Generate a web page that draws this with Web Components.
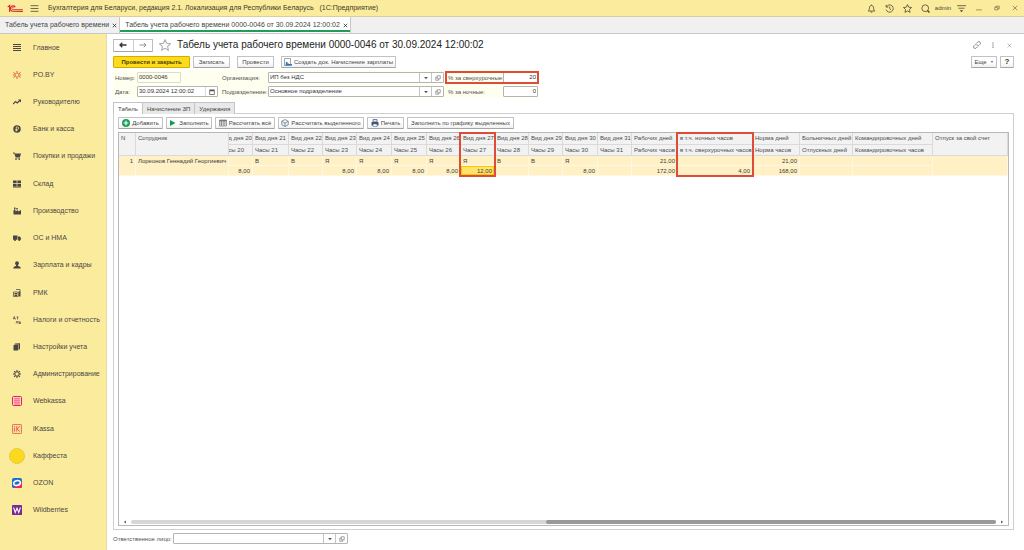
<!DOCTYPE html>
<html lang="ru">
<head>
<meta charset="utf-8">
<title>Табель учета рабочего времени</title>
<style>
html, body { margin: 0; height: 100%; }
body { font: 6px/8px "Liberation Sans", Arial, sans-serif; color: #444; background: #fff; }
</style>
</head>
<body>
<app-shell></app-shell>
<script>
const define = (name, render) => customElements.define(name, class extends HTMLElement {
  connectedCallback() {
    if (this.shadowRoot) return;
    const t = document.createElement('template');
    t.innerHTML = typeof render === 'function' ? render(this) : render;
    this.attachShadow({ mode: 'open' }).append(t.content.cloneNode(true));
  }
});

/* Icons: 16-unit box, drawn with currentColor unless a colour is part of the sign */
const S = 'fill="none" stroke="currentColor" stroke-width="1.4"';
const icons = {
  logo: '<g fill="none" stroke="#d8232f" stroke-width="2"><path d="M1 5.500L4.500 2.500V14"/><path d="M14.500 5.500A4.800 4.800 0 1 0 10.500 13H28"/><path d="M12.600 6.500A2.300 2.300 0 1 0 10.500 10H28" stroke-width="1.500"/></g>',
  menu: `<path ${S} d="M1 3h14M1 8h14M1 13h14"/>`,
  bell: `<path ${S} d="M2 12.500c2-1.500 2-3 2.300-5.500C4.600 4 6 2.500 8 2.500S11.400 4 11.700 7c.3 2.500.3 4 2.300 5.500zM6.500 14.500h3M8 2.500V1"/>`,
  history: `<path ${S} d="M2.500 5A6.500 6.500 0 1 1 2 10M2 1.500V5.500H6M8.500 4.500V8.500L11 10.500"/>`,
  star: `<path ${S} d="M8 1l2.200 4.700 5.100.6-3.800 3.500 1 5.100L8 12.400 3.500 14.900l1-5.100L.7 6.300l5.100-.6z"/>`,
  search: `<circle cx="7.500" cy="7.500" r="6" ${S}/><path fill="none" stroke="currentColor" stroke-width="2.500" d="M11.500 11.500L15 15"/>`,
  filter: `<path ${S} d="M0 3h16M2.500 7.500h11"/><path fill="currentColor" d="M5 11h6l-3 3.500z"/>`,
  min: `<path ${S} d="M0 13h16"/>`,
  restore: `<path ${S} d="M2 6h8v7H2zM5 6V3h9v7h-4"/>`,
  close: `<path ${S} d="M2 2l12 12M14 2L2 14"/>`,
  x: '<path fill="none" stroke="currentColor" stroke-width="2.600" d="M2.500 2.500l11 11M13.500 2.500l-11 11"/>',
  link: `<path ${S} d="M7 4.500L9.500 2a3 3 0 0 1 4.500 4.500L11.500 9A3 3 0 0 1 7.500 9M9 11.500L6.500 14A3 3 0 0 1 2 9.500L4.500 7A3 3 0 0 1 8.500 7"/>`,
  dots: '<g fill="currentColor"><path d="M6.500 1h3v3h-3zM6.500 6.500h3v3h-3zM6.500 12h3v3h-3z"/></g>',
  back: '<path fill="none" stroke="currentColor" stroke-width="2.600" d="M15 8H2M6.500 3.500L2 8l4.500 4.500"/>',
  fwd: '<path fill="none" stroke="currentColor" stroke-width="1.800" d="M1 8h13M9.500 3.500L14 8l-4.500 4.500"/>',
  caret: '<path fill="currentColor" d="M3 5h10l-5 6z"/>',
  open: `<path ${S} d="M6 2h8v8H6zM6 5.500H2V14h8v-4"/>`,
  calendar: '<path fill="currentColor" d="M1 1h14v14H1zM3 6v7h10V6z" fill-rule="evenodd"/>',
  left: '<path fill="currentColor" d="M12 2v12L3 8z"/>',
  right: '<path fill="currentColor" d="M4 2v12l9-6z"/>',
  home: '<path fill="none" stroke="currentColor" stroke-width="2.200" d="M0 1h16M0 5h16M0 9h16M0 13h16"/>',
  burst: '<g fill="none" stroke="#e0453a" stroke-width="1.800"><path d="M8 0v6M8 10v6M1 3l5 3.500M10 9.500l5 3.500M15 3l-5 3.500M6 9.500L1 13M0 8h5M11 8h5"/></g>',
  chart: '<path fill="none" stroke="currentColor" stroke-width="2.400" d="M0 12L5 7l3.500 3L14 4.500"/><path fill="currentColor" d="M10 3h6v6z"/>',
  coin: '<circle cx="8" cy="8" r="7.500" fill="currentColor"/><path fill="none" stroke="#fbec9d" stroke-width="1.500" d="M6.500 13V4H9a2.300 2.300 0 0 1 0 4.800H5M5 11h4"/>',
  cart: '<path fill="currentColor" d="M0 1h3l1 2h12l-2 7H5L2.500 3H0zM5 11h9v1.500H5z"/><circle cx="6" cy="14.300" r="1.600" fill="currentColor"/><circle cx="12.500" cy="14.300" r="1.600" fill="currentColor"/>',
  boxes: '<path fill="currentColor" d="M0 1h7.300v5.500H0zM8.700 1H16v5.500H8.700zM0 8h7.300v5H0zM8.700 8H16v5H8.700zM0 13.500h16V15H0z"/>',
  factory: '<path fill="currentColor" d="M1 15V6h4v3l5-3v3l6-3v9zM2 1h3v4H2zM6.500 2h3v3h-3z"/>',
  truck: '<path fill="currentColor" d="M0 3h9v8.500H0zM10 5h3.500L16 8v3.500h-6z"/><circle cx="4" cy="12" r="2" fill="currentColor"/><circle cx="12.500" cy="12" r="2" fill="currentColor"/>',
  person: '<circle cx="8" cy="4.500" r="3.800" fill="currentColor"/><path fill="currentColor" d="M6 7h4v3c3 .5 5.500 1.500 5.500 5H.5c0-3.500 2.500-4.500 5.500-5z"/>',
  register: `<path ${S} d="M6 1h8v5M1 6h9v9H1z"/><path fill="currentColor" d="M3 8h5v2H3zM3 11h5v3H3zM11 5h4v10h-4z"/>`,
  taxes: `<path ${S} d="M0 7l2.500-6L5 7M1 5h3M7 2h4M9 2v5M6 10l4 5M10 10l-4 5M12 10v5h3v-3h-3"/>`,
  books: '<path fill="currentColor" d="M1 4l9-1v12H1zM4 1l10-.5V12l-3 2V2.500L3 3z"/>',
  gear: '<circle cx="8" cy="8" r="4.400" fill="none" stroke="currentColor" stroke-width="2"/><path fill="none" stroke="currentColor" stroke-width="2.200" d="M8 0v3.500M8 12.500V16M0 8h3.500M12.500 8H16M2.300 2.300l2.500 2.500M11.200 11.200l2.500 2.500M13.700 2.300l-2.500 2.500M4.800 11.200l-2.500 2.500"/>',
  webkassa: '<rect x=".8" y=".8" width="14.400" height="14.400" rx="1.500" fill="#fbd5cf" stroke="#ec1f4e" stroke-width="1.600"/><path fill="none" stroke="#ee5a74" stroke-width="1" d="M3 4h10M3 7h10M3 10h10M3 13h10M5 3v10M8 3v10M11 3v10"/>',
  ikassa: '<rect x=".8" y=".8" width="14.400" height="14.400" rx="1" fill="#fbd99a" stroke="#e5604b" stroke-width="1.300"/><path fill="none" stroke="#e5604b" stroke-width="1.400" d="M4 6v6M4 3.500V5M7.500 3.500V12M12.500 3.500L8 8l4.500 4"/>',
  sun: '<circle cx="8" cy="8" r="7.500" fill="#fbd91c" stroke="#c89b26" stroke-width=".6" stroke-dasharray="1 .6"/>',
  ozon: '<rect width="16" height="16" rx="3" fill="#1c6fd0"/><path fill="#f0245a" d="M16 6v7a3 3 0 0 1-3 3H2z"/><ellipse cx="8" cy="8" rx="5.500" ry="3.800" fill="none" stroke="#fff" stroke-width="2.600" transform="rotate(-15 8 8)"/>',
  wb: '<rect width="16" height="16" rx="1" fill="#7c2a9a"/><path fill="none" stroke="#fff" stroke-width="1.700" d="M2.500 4l2.700 8L8 5l2.800 7 2.700-8"/>',
  plus: '<circle cx="8" cy="8" r="8" fill="#1fa05a"/><path stroke="#fff" stroke-width="2.400" d="M8 3.500v9M3.500 8h9"/>',
  play: '<path fill="#149a4c" d="M2 2l11 6-11 6z"/>',
  grid: `<path fill="none" stroke="#777" stroke-width="1.400" d="M1 2h14v12H1zM1 6h14M1 10h14M5 2v12M10 2v12"/><path fill="#777" d="M1 2h14v2.500H1z"/>`,
  cube: '<path fill="#eef3f8" stroke="#566b80" stroke-width="1.400" d="M8 1l6.500 3.500v7L8 15l-6.500-3.500v-7zM1.500 4.500L8 8l6.500-3.500M8 8v7"/>',
  printer: '<path fill="#dfe7f0" stroke="#3f5878" stroke-width="1.400" d="M4 1h8v5H4z"/><path fill="#3f5878" d="M1 6h14v7H1z"/><path fill="#fff" stroke="#3f5878" d="M4 10h8v5H4z"/>',
  doc: '<path fill="#fff" stroke="#777" stroke-width="1.300" d="M1 1h12v14H1z"/><path fill="#2b78b8" d="M4 8h3v3h3v1h6v3H3z"/>'
};
define('ui-icon', el => {
  const n = el.getAttribute('name');
  return `<style>:host{display:inline-flex;flex:none;width:8px;height:8px}
  :host([big]){width:16px;height:16px}:host([mid]){width:10px;height:10px}:host([small]){width:6px;height:6px}:host([name=logo]){width:16px;height:9px}
  svg{width:100%;height:100%}</style><svg viewBox="0 0 ${n === 'logo' ? 28 : 16} 16" aria-hidden="true">${icons[n]}</svg>`;
});

define('tool-button', el => `<style>
  :host{display:inline-flex}
  button{font:inherit;color:#444;display:flex;align-items:center;justify-content:center;gap:2px;height:12px;width:100%;padding:0 4px;margin:0;box-sizing:border-box;white-space:nowrap;
    background:linear-gradient(#fff 50%,#f0f0f0);border:1px solid #c2c2c2;border-bottom-color:#a5a5a5;border-radius:1px}
  :host([icon]) button{padding:0 3px}
  :host([primary]) button{background:#fedb1a;border-color:#d2ae00;font-weight:bold;color:#4b3d00}
  :host([square]) button{padding:0;font-weight:bold;font-size:8px;color:#333}
  </style><button type="button">${el.hasAttribute('icon') ? `<ui-icon name="${el.getAttribute('icon')}"></ui-icon>` : ''}<slot></slot></button>`);

define('icon-button', el => `<style>
  :host{display:inline-flex}
  button{all:unset;display:flex;align-items:center;justify-content:center;width:100%;height:100%;cursor:pointer}
  </style><button type="button" aria-label="${el.getAttribute('label')}"><slot></slot></button>`);

define('form-field', el => {
  const a = n => el.getAttribute(n) || '';
  const kind = a('kind');
  const btn = (icon, label) => `<button type="button" aria-label="${label}"><ui-icon small name="${icon}"></ui-icon></button>`;
  return `<style>
  :host{display:flex;align-items:center;color:#505050}
  label{flex:none;width:var(--label,22px);white-space:nowrap}
  .box{display:flex;flex:1;min-width:0;height:11px;box-sizing:border-box;border:1px solid #b4b4b4;border-radius:1px;background:#fff}
  input{all:unset;flex:1;min-width:0;font:inherit;color:#333;padding:0 1px;line-height:9px;height:9px}
  button{all:unset;width:11px;display:flex;align-items:center;justify-content:center;border-left:1px solid #c4c4c4;color:#555}
  :host([readonly]) .box{background:#fffff0;border-color:#dcdccc}
  :host([kind=number]) input{text-align:right}
  :host([kind=date]) button{border-left-color:#ddd}
  :host([marked]){outline:2px solid #dd4b39;outline-offset:-1px}
  </style><label for="f">${a('label')}</label><div class="box"><input id="f" type="text" value="${a('value')}" ${el.hasAttribute('readonly') ? 'readonly' : ''}>${
    kind === 'ref' ? btn('caret', 'Выбрать') + btn('open', 'Открыть') : kind === 'date' ? btn('calendar', 'Календарь') : ''}</div>`;
});

define('title-bar', `<style>
  :host{display:flex;align-items:center;height:16px;background:#fbec9d;border-bottom:1px solid #d8cfa0;padding:0 0 0 7px;box-sizing:content-box;color:#4c4533}
  .name{font-size:7px;margin-left:10px;color:#3c3828;white-space:pre;flex:1}
  .menu{margin-left:7px}
  icon-button{width:18px;height:16px}
  icon-button ui-icon:not([small]){width:9px;height:9px}
  .menu{width:8px}
  .user{width:18px;text-align:center}
  </style>
  <ui-icon name="logo"></ui-icon><icon-button class="menu" label="Меню"><ui-icon name="menu"></ui-icon></icon-button>
  <span class="name">Бухгалтерия для Беларуси, редакция 2.1. Локализация для Республики Беларусь   (1С:Предприятие)</span>
  <icon-button label="Уведомления"><ui-icon name="bell"></ui-icon></icon-button>
  <icon-button label="История"><ui-icon name="history"></ui-icon></icon-button>
  <icon-button label="Избранное"><ui-icon name="star"></ui-icon></icon-button>
  <icon-button label="Поиск"><ui-icon name="search"></ui-icon></icon-button>
  <span class="user">admin</span>
  <icon-button label="Настройки"><ui-icon name="filter"></ui-icon></icon-button>
  <icon-button label="Свернуть"><ui-icon small name="min"></ui-icon></icon-button>
  <icon-button label="Восстановить"><ui-icon small name="restore"></ui-icon></icon-button>
  <icon-button label="Закрыть"><ui-icon small name="close"></ui-icon></icon-button>`);

define('window-tab', `<style>
  :host{display:flex;align-items:center;gap:3px;padding:0 2px 0 5px;font-size:7px;color:#444;border-right:1px solid #c8c8c8;white-space:nowrap}
  :host([active]){background:#fff;box-shadow:inset 0 -1px #fff,inset 0 -3px #1e9e59}
  icon-button{width:5px;height:5px;color:#333}
  ui-icon{width:5px;height:5px}
  </style><slot></slot><icon-button label="Закрыть вкладку"><ui-icon name="x"></ui-icon></icon-button>`);

define('window-tabs', `<style>
  :host{display:flex;height:16px;background:#f0f0f0;border-bottom:1px solid #c8c8c8}
  </style><window-tab>Табель учета рабочего времени</window-tab><window-tab active>Табель учета рабочего времени 0000-0046 от 30.09.2024 12:00:02</window-tab>`);

define('nav-item', el => `<style>
  :host{display:flex;min-height:16px}
  a{display:flex;align-items:center;flex:1;gap:8px;padding-left:9px;color:#4b4545;text-decoration:none;font-size:7px;white-space:nowrap}
  .ic{width:16px;display:flex;justify-content:center}
  </style><a href="#"><span class="ic"><ui-icon ${el.getAttribute('size') || ''} name="${el.getAttribute('icon')}"></ui-icon></span><slot></slot></a>`);

const sections = [['home','Главное'],['burst','PO.BY'],['chart','Руководителю'],['coin','Банк и касса'],['cart','Покупки и продажи'],['boxes','Склад'],['factory','Производство'],['truck','ОС и НМА'],['person','Зарплата и кадры'],['register','РМК'],['taxes','Налоги и отчетность'],['books','Настройки учета'],['gear','Администрирование'],['webkassa','Webkassa','mid'],['ikassa','iKassa','mid'],['sun','Каффеста','big'],['ozon','OZON','mid'],['wb','Wildberries','mid']];
define('side-nav', `<style>
  :host{display:block;background:#fbec9d;border-right:1px solid #e6dca0;box-sizing:border-box}
  nav{display:grid;grid-auto-rows:1fr;height:100%;box-sizing:border-box;padding-bottom:26px}
  </style><nav aria-label="Разделы">${sections.map(([i, t, s]) => `<nav-item icon="${i}" size="${s || ''}">${t}</nav-item>`).join('')}</nav>`);

define('doc-header', `<style>
  :host{display:flex;align-items:center;height:14px}
  .nav{display:flex;height:11px;width:38px;border:1px solid #bdbdbd;border-bottom-color:#a5a5a5;border-radius:1px;background:#fff;color:#333}
  .nav icon-button{flex:1}
  .nav icon-button+icon-button{border-left:1px solid #ccc;color:#888}
  .star{margin:0 6px;width:12px;color:#aaa}
  .star ui-icon{width:12px;height:12px}
  h1{flex:1;margin:0;font-size:10px;line-height:14px;font-weight:normal;color:#222;white-space:nowrap}
  .end{width:10px;margin-left:6px;color:#666}
  .end:last-child ui-icon{width:5px;height:5px}
  </style>
  <div class="nav"><icon-button label="Назад"><ui-icon name="back"></ui-icon></icon-button><icon-button label="Вперед"><ui-icon name="fwd"></ui-icon></icon-button></div>
  <icon-button class="star" label="В избранное"><ui-icon name="star"></ui-icon></icon-button>
  <h1>Табель учета рабочего времени 0000-0046 от 30.09.2024 12:00:02</h1>
  <icon-button class="end" label="Ссылка"><ui-icon name="link"></ui-icon></icon-button>
  <icon-button class="end" label="Еще"><ui-icon small name="dots"></ui-icon></icon-button>
  <icon-button class="end" label="Закрыть"><ui-icon name="close"></ui-icon></icon-button>`);

define('command-bar', `<style>
  :host{display:flex;gap:3px;height:12px}
  .gap{margin-left:4px}.end{margin-left:auto}
  .caret{width:4px;height:4px;margin-left:1px}
  </style>
  <tool-button primary style="width:77px">Провести и закрыть</tool-button>
  <tool-button style="width:37px">Записать</tool-button>
  <tool-button class="gap" style="width:37px">Провести</tool-button>
  <tool-button class="gap" icon="doc" style="width:115px">Создать док. Начисление зарплаты</tool-button>
  <tool-button class="end" style="width:26px">Еще <ui-icon class="caret" name="caret"></ui-icon></tool-button>
  <tool-button square style="width:14px">?</tool-button>`);

define('doc-form', `<style>
  :host{display:grid;grid-template-columns:105px 222px 92px;column-gap:2px;row-gap:3px;width:max-content;padding:2px 1px 1px 2px;background:#fffff0}
  .no{width:66px}.date{width:103px}.org{--label:46px}
  .pct{--label:55px;padding-left:2px}
  </style>
  <form-field class="no" label="Номер:" value="0000-0046" readonly></form-field>
  <form-field class="org" label="Организация:" value="ИП без НДС" kind="ref"></form-field>
  <form-field class="pct" marked label="% за сверхурочные:" value="20" kind="number"></form-field>
  <form-field class="date" label="Дата:" value="30.09.2024 12:00:02" kind="date"></form-field>
  <form-field class="org" label="Подразделение:" value="Основное подразделение" kind="ref"></form-field>
  <form-field class="pct" label="% за ночные:" value="0" kind="number"></form-field>`);

define('page-tabs', `<style>
  :host{display:flex}
  button{font:inherit;color:#444;margin:0 0 0 -1px;height:12px;padding:0 4px;border:1px solid #c4c4c4;border-bottom:0;background:#e8e8e8}
  button:first-child{margin:0;background:#fff}
  [role=tablist]{display:flex;margin-bottom:-1px;z-index:1}
  </style><div role="tablist"><button role="tab" aria-selected="true">Табель</button><button role="tab">Начисление ЗП</button><button role="tab">Удержания</button></div>`);

define('table-tools', `<style>:host{display:flex;gap:3px}</style>
  <tool-button icon="plus" style="width:45px">Добавить</tool-button>
  <tool-button icon="play" style="width:46px">Заполнить</tool-button>
  <tool-button icon="grid" style="width:60px">Рассчитать всё</tool-button>
  <tool-button icon="cube" style="width:86px">Рассчитать выделенного</tool-button>
  <tool-button icon="printer" style="width:37px">Печать</tool-button>
  <tool-button style="width:107px">Заполнить по графику выделенных</tool-button>`);

/* Timesheet columns: width, upper heading, lower heading, upper value, lower value */
const days = [[20,24,'','8,00'],[21,36,'В',''],[22,34,'В',''],[23,34,'Я','8,00'],[24,35,'Я','8,00'],[25,35,'Я','8,00'],[26,34,'Я','8,00'],[27,34,'Я','12,00'],[28,34,'В',''],[29,34,'В',''],[30,35,'Я','8,00'],[31,34,'','']]
  .map(([d, w, a, b]) => ({ w, h: ['Вид дня ' + d, 'Часы ' + d], v: [a, b], cls: d === 20 ? 'cut' : '', mark: d === 27 }));
const cols = [...days,
  { w: 46, h: ['Рабочих дней', 'Рабочих часов'], v: ['21,00', '172,00'], num: 1 },
  { w: 75, h: ['в т.ч. ночных часов', 'в т.ч. сверхурочных часов'], v: ['', '4,00'], num: 1, mark: 1 },
  { w: 47, h: ['Норма дней', 'Норма часов'], v: ['21,00', '168,00'], num: 1 },
  { w: 53, h: ['Больничных дней', 'Отпускных дней'], v: ['', ''] },
  { w: 80, h: ['Командировочных дней', 'Командировочных часов'], v: ['', ''] }];
define('timesheet-table', `<style>
  :host{display:flex;flex-direction:column;border:1px solid #b8b8b8;background:#fff;box-sizing:border-box}
  table{border-collapse:separate;border-spacing:0;table-layout:fixed;width:100%}
  th,td{padding:0 2px;box-sizing:border-box;white-space:nowrap;text-align:left;font-weight:normal;line-height:8px}
  th{background:#f2f2f2;color:#4c4c4c;border-right:1px solid #dadada;border-bottom:1px solid #dadada;height:11px;vertical-align:top;padding-top:1px}
  tr:first-child th{height:12px}
  td{background:#fff1c5;border-right:1px solid #fff8e0;border-bottom:1px solid #fff8e0;height:10px;color:#3c3c3c;vertical-align:top;padding-top:1px}
  td.num{text-align:right}
  .cut{overflow:hidden;text-indent:-10px}
  .mark{position:relative}
  .mark i{position:absolute;left:-2px;top:-1px;right:-2px;height:45px;box-sizing:border-box;border:2px solid #dd4b39;z-index:1}
  .sel{background:#ffe36b;box-shadow:inset 0 0 0 1px #f5c800}
  .space{flex:1}
  .scroll{display:flex;align-items:center;height:7px;padding:0 4px;gap:4px;color:#666}
  .scroll ui-icon{width:4px;height:4px}
  .track{flex:1;height:4px;border-radius:2px;background:#d6d6d6;display:flex;justify-content:flex-end}
  .thumb{width:52%;background:#999;border-radius:2px}
  </style>
  <table><colgroup><col style="width:17px"><col style="width:93px">${cols.map(c => `<col style="width:${c.w}px">`).join('')}<col></colgroup>
  <thead>
  <tr><th rowspan="2">N</th><th rowspan="2">Сотрудник</th>${cols.map(c => `<th class="${c.cls || ''}${c.mark ? ' mark' : ''}">${c.h[0]}${c.mark ? '<i></i>' : ''}</th>`).join('')}<th rowspan="2">Отпуск за свой счет</th></tr>
  <tr>${cols.map(c => `<th class="${c.cls || ''}">${c.h[1]}</th>`).join('')}</tr>
  </thead><tbody>
  <tr><td rowspan="2" class="num">1</td><td rowspan="2">Лореонов Геннадий Георгиевич</td>${cols.map(c => `<td class="${c.num ? 'num' : ''}">${c.v[0]}</td>`).join('')}<td rowspan="2"></td></tr>
  <tr>${cols.map(c => `<td class="num${c.v[1] === '12,00' ? ' sel' : ''}">${c.v[1]}</td>`).join('')}</tr>
  </tbody></table>
  <div class="space"></div>
  <div class="scroll"><ui-icon name="left"></ui-icon><div class="track"><div class="thumb"></div></div><ui-icon name="right"></ui-icon></div>`);

define('timesheet-doc', `<style>
  :host{display:flex;flex-direction:column;padding:4px 10px 6px 6px;box-sizing:border-box;min-width:0}
  command-bar{margin:4px 0 2px}
  page-tabs{margin-top:4px}
  .panel{flex:1;display:flex;flex-direction:column;gap:3px;border:1px solid #cfcfcf;padding:3px 4px}
  timesheet-table{flex:1}
  .resp{--label:60px;width:235px;margin-top:3px}
  </style>
  <doc-header></doc-header><command-bar></command-bar><doc-form></doc-form><page-tabs></page-tabs>
  <section class="panel"><table-tools></table-tools><timesheet-table></timesheet-table></section>
  <form-field class="resp" label="Ответственное лицо:" kind="ref"></form-field>`);

define('app-shell', `<style>
  :host{display:flex;flex-direction:column;min-height:100%}
  main{flex:1;display:grid;grid-template-columns:107px 1fr}
  </style><title-bar></title-bar><window-tabs></window-tabs><main><side-nav></side-nav><timesheet-doc></timesheet-doc></main>`);
</script>
</body>
</html>
